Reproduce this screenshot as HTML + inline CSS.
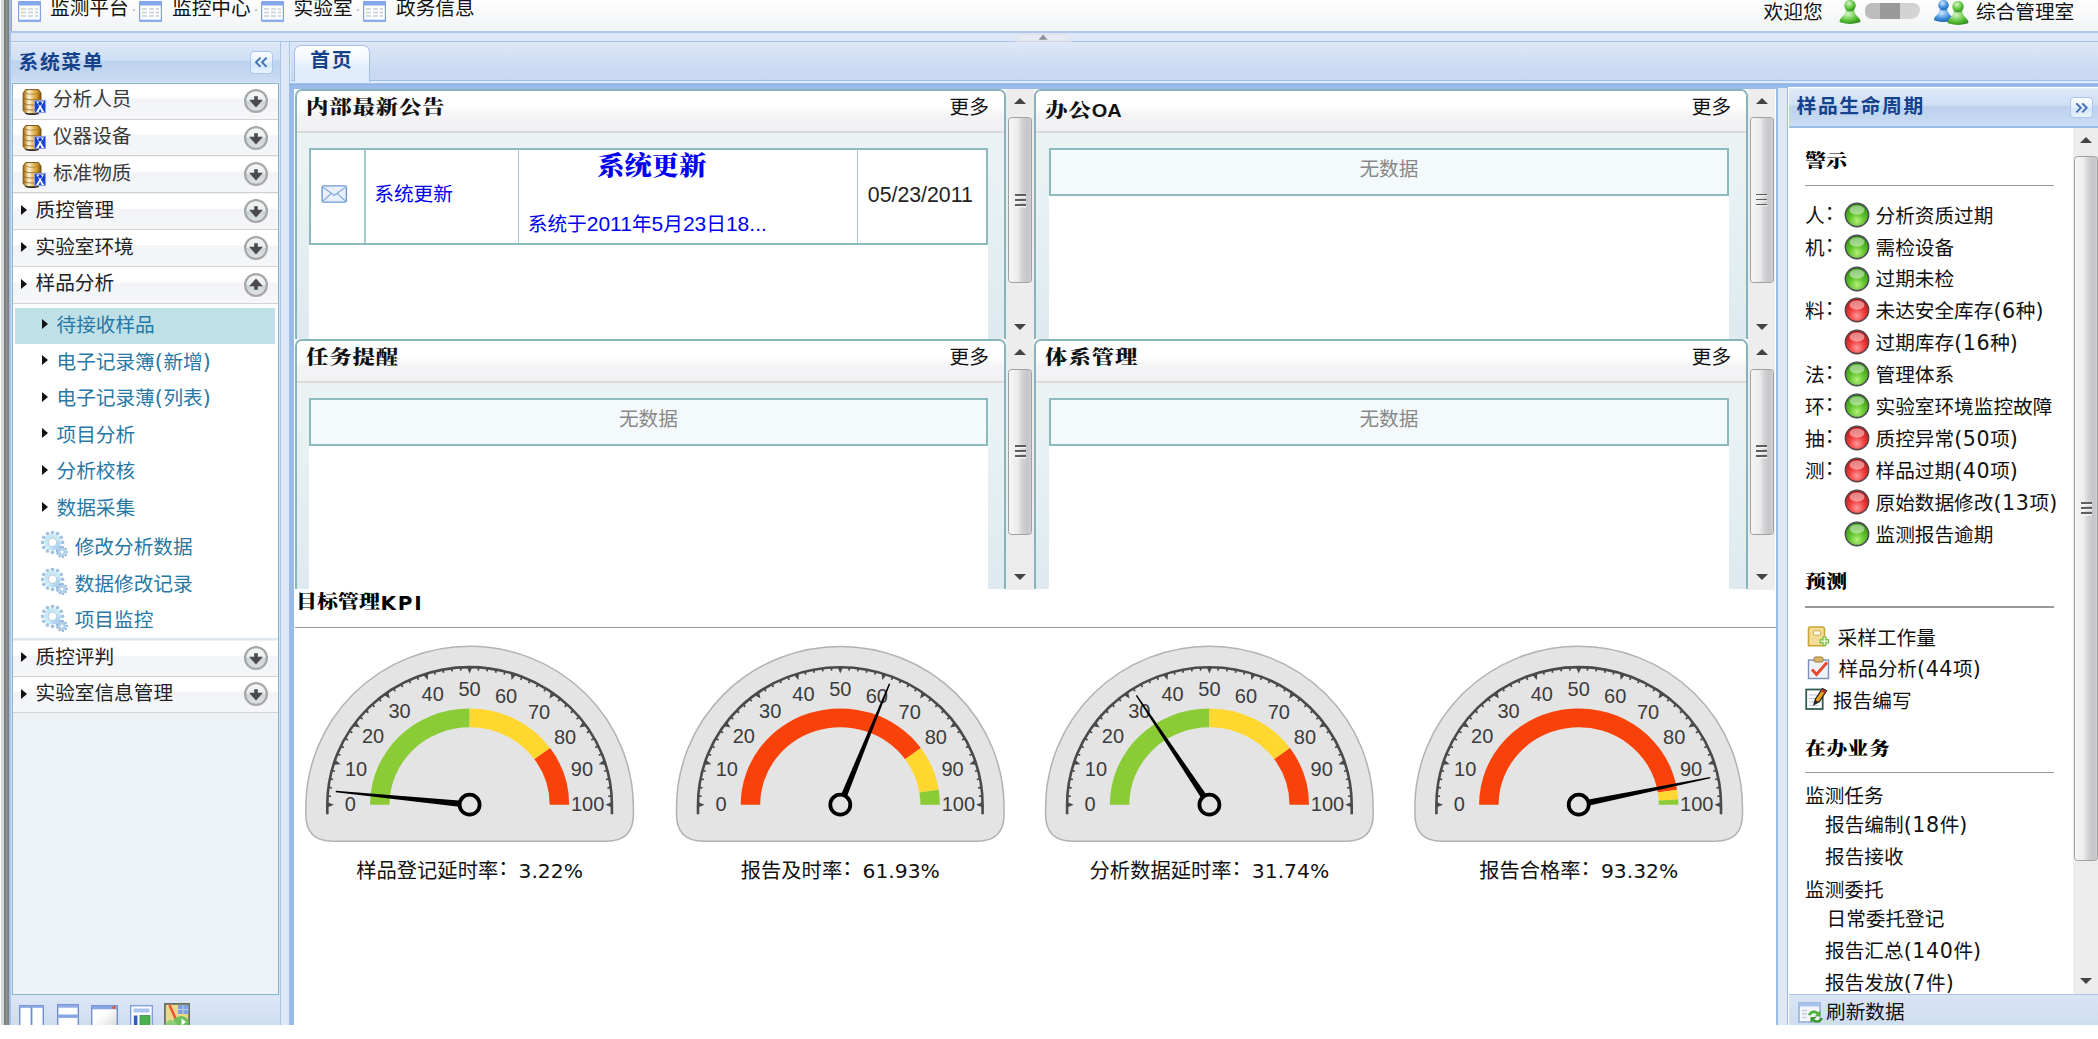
<!DOCTYPE html><html lang="zh"><head><meta charset="utf-8"><title>监测平台</title><style>
html,body{margin:0;padding:0;}
body{width:2098px;height:1039px;overflow:hidden;background:#fff;position:relative;
 font-family:"DejaVu Sans","Liberation Sans","Noto Sans CJK SC",sans-serif;font-size:19.67px;color:#222;}
.a{position:absolute;}
.t{position:absolute;white-space:nowrap;line-height:24px;height:24px;}
.b{font-weight:bold;}
.hd{background:linear-gradient(#e8f0fa 0%,#dbe7f7 6%,#cfdff4 45%,#bed2ee 48%,#c2d6f0 75%,#cddef4 100%);}
.row{position:absolute;left:0;width:266px;height:35.3px;background:linear-gradient(#fff 0%,#fff 41%,#f3f4f7 44%,#f5f6f8 100%);border-bottom:1.5px solid #d2d2d2;}
.sub{position:absolute;white-space:nowrap;color:#2878a5;line-height:24px;height:24px;}
.tri{position:absolute;width:0;height:0;border-left:6px solid #111;border-top:5.5px solid transparent;border-bottom:5.5px solid transparent;}
.pl{position:absolute;overflow:hidden;border:2.2px solid #86b4ba;border-bottom:none;border-radius:7px 7px 0 0;background:linear-gradient(#eaf2f4 30%,#deeaf0 100%);box-sizing:border-box;}
.plh{position:absolute;left:0;top:0;right:0;height:39.6px;background:linear-gradient(#fff 0%,#fff 40%,#f4f4f6 60%,#f1f1f4 100%);border-bottom:2.2px solid #dadada;}
.sb{position:absolute;background:#ededed;}
.th{position:absolute;left:1.4px;right:1.6px;border:1.8px solid #a0a0a0;border-radius:3.5px;background:linear-gradient(90deg,#f6f6f6 0%,#ececec 40%,#d2d2d5 60%,#c6c6ca 85%,#cfcfd2 100%);box-sizing:border-box;}
.hr{position:absolute;height:1.6px;background:#9a9a9a;}
.box{position:absolute;box-sizing:border-box;border:2.2px solid #8dbabf;background:#f4f9fb;}
.lk{color:#0000f0;}
.gy{color:#888;}
.c{position:relative;top:-2.8px;}
.n{letter-spacing:0.6px;font-size:20.6px;line-height:0;}
.d{font-family:'Liberation Sans',sans-serif;font-size:21px;line-height:0;}
</style></head><body>
<svg width="0" height="0" style="position:absolute"><defs><linearGradient id="db" x1="0" x2="1"><stop offset="0" stop-color="#8f6418"/><stop offset="0.12" stop-color="#c79a45"/><stop offset="0.32" stop-color="#fff6dc"/><stop offset="0.52" stop-color="#e9c77a"/><stop offset="0.78" stop-color="#d39a2c"/><stop offset="1" stop-color="#7c4f0c"/></linearGradient><linearGradient id="rb" x1="0" y1="0" x2="0" y2="1"><stop offset="0" stop-color="#f6f8f8"/><stop offset="0.5" stop-color="#e8edef"/><stop offset="0.5" stop-color="#cbd3d6"/><stop offset="1" stop-color="#e0e5e7"/></linearGradient><linearGradient id="gr" x1="0" y1="0" x2="1" y2="1"><stop offset="0" stop-color="#bfe0f2"/><stop offset="0.55" stop-color="#c8eef8"/><stop offset="1" stop-color="#8fb8e8"/></linearGradient></defs></svg>
<div class="a" style="left:1px;top:0;width:3px;height:1025px;background:#d5d9d7"></div>
<div class="a" style="left:4px;top:0;width:5px;height:1025px;background:linear-gradient(90deg,#6f787d,#8f8f8f 50%,#78787e)"></div>
<div class="a" style="left:9px;top:0;width:2089px;height:1025px;background:#dfe8f6"></div>
<div class="a" style="left:8.7px;top:0;width:2px;height:1025px;background:#9fbee6"></div>
<div class="a" style="left:11px;top:0;width:2087px;height:31px;background:linear-gradient(#fdfdfe 0%,#f8f9fa 45%,#f1f2f5 100%);border-left:1.7px solid #a2a2a2;box-sizing:border-box"></div>
<div class="a" style="left:9px;top:31px;width:2089px;height:2.2px;background:#adc8ec"></div>
<div class="a" style="left:9px;top:41px;width:2089px;height:1.3px;background:#a5c4ec"></div>
<svg class="a" style="left:18px;top:0.6px" width="23" height="21" viewBox="0 0 23 21"><rect x="0.5" y="0.5" width="22" height="20" rx="1.5" fill="#fdfdfe" stroke="#7fa2e6" stroke-width="1.4"/><rect x="0.5" y="0.5" width="22" height="4" fill="#86a8ea"/><g stroke="#c9cdd6" stroke-width="1.3"><path d="M3 8H8M10 8H15M17 8H20M3 11.5H8M10 11.5H15M17 11.5H20M3 15H8M10 15H15M17 15H20"/></g><rect x="0.5" y="18.6" width="22" height="1.9" fill="#8fb0ee"/></svg>
<div class="t" style="left:50px;top:-3.4px;font-size:19.67px;color:#111">监测平台</div>
<svg class="a" style="left:139.4px;top:0.6px" width="23" height="21" viewBox="0 0 23 21"><rect x="0.5" y="0.5" width="22" height="20" rx="1.5" fill="#fdfdfe" stroke="#7fa2e6" stroke-width="1.4"/><rect x="0.5" y="0.5" width="22" height="4" fill="#86a8ea"/><g stroke="#c9cdd6" stroke-width="1.3"><path d="M3 8H8M10 8H15M17 8H20M3 11.5H8M10 11.5H15M17 11.5H20M3 15H8M10 15H15M17 15H20"/></g><rect x="0.5" y="18.6" width="22" height="1.9" fill="#8fb0ee"/></svg>
<div class="t" style="left:172px;top:-3.4px;font-size:19.67px;color:#111">监控中心</div>
<svg class="a" style="left:261.4px;top:0.6px" width="23" height="21" viewBox="0 0 23 21"><rect x="0.5" y="0.5" width="22" height="20" rx="1.5" fill="#fdfdfe" stroke="#7fa2e6" stroke-width="1.4"/><rect x="0.5" y="0.5" width="22" height="4" fill="#86a8ea"/><g stroke="#c9cdd6" stroke-width="1.3"><path d="M3 8H8M10 8H15M17 8H20M3 11.5H8M10 11.5H15M17 11.5H20M3 15H8M10 15H15M17 15H20"/></g><rect x="0.5" y="18.6" width="22" height="1.9" fill="#8fb0ee"/></svg>
<div class="t" style="left:293.6px;top:-3.4px;font-size:19.67px;color:#111">实验室</div>
<svg class="a" style="left:363.4px;top:0.6px" width="23" height="21" viewBox="0 0 23 21"><rect x="0.5" y="0.5" width="22" height="20" rx="1.5" fill="#fdfdfe" stroke="#7fa2e6" stroke-width="1.4"/><rect x="0.5" y="0.5" width="22" height="4" fill="#86a8ea"/><g stroke="#c9cdd6" stroke-width="1.3"><path d="M3 8H8M10 8H15M17 8H20M3 11.5H8M10 11.5H15M17 11.5H20M3 15H8M10 15H15M17 15H20"/></g><rect x="0.5" y="18.6" width="22" height="1.9" fill="#8fb0ee"/></svg>
<div class="t" style="left:396px;top:-3.4px;font-size:19.67px;color:#111">政务信息</div>
<div class="a" style="left:132.5px;top:9px;width:2px;height:2px;background:#c5c5c5"></div>
<div class="a" style="left:254.5px;top:9px;width:2px;height:2px;background:#c5c5c5"></div>
<div class="a" style="left:356.5px;top:9px;width:2px;height:2px;background:#c5c5c5"></div>
<div class="t" style="left:1763.6px;top:0.6px;font-size:19.67px;color:#111">欢迎您</div>
<svg class="a" style="left:1839.4px;top:0px" width="22" height="24" viewBox="0 0 22 24"><defs><radialGradient id="g5cc33a" cx="40%" cy="30%" r="75%"><stop offset="0" stop-color="#d6f5c8"/><stop offset="0.6" stop-color="#5cc33a"/><stop offset="1" stop-color="#2e8a1d"/></radialGradient></defs><path d="M2.2 22.6C0.6 22.4 0.2 21 1 19.6C3.6 15.8 6.6 14.2 7 9.8H15C15.4 14.2 18.4 15.8 21 19.6C21.8 21 21.4 22.4 19.8 22.6Q11 25.4 2.2 22.6Z" fill="url(#g5cc33a)"/><circle cx="11" cy="5.6" r="5.7" fill="url(#g5cc33a)"/></svg>
<div class="a" style="left:1865px;top:3.3px;width:55px;height:16.2px;border-radius:9px 9px 12px 9px;background:linear-gradient(90deg,#bdbdbd 0,#bdbdbd 27%,#999 27.5%,#999 63%,#d3d3d3 63.5%,#d3d3d3 100%)"></div>
<svg class="a" style="left:1933.4px;top:0px" width="21" height="22" viewBox="0 0 22 24"><defs><radialGradient id="g3f8fdc" cx="40%" cy="30%" r="75%"><stop offset="0" stop-color="#cfe6fb"/><stop offset="0.6" stop-color="#3f8fdc"/><stop offset="1" stop-color="#1f5fa8"/></radialGradient></defs><path d="M2.2 22.6C0.6 22.4 0.2 21 1 19.6C3.6 15.8 6.6 14.2 7 9.8H15C15.4 14.2 18.4 15.8 21 19.6C21.8 21 21.4 22.4 19.8 22.6Q11 25.4 2.2 22.6Z" fill="url(#g3f8fdc)"/><circle cx="11" cy="5.6" r="5.7" fill="url(#g3f8fdc)"/></svg>
<svg class="a" style="left:1946.5px;top:1px" width="22" height="24" viewBox="0 0 22 24"><defs><radialGradient id="g5cc33a" cx="40%" cy="30%" r="75%"><stop offset="0" stop-color="#d6f5c8"/><stop offset="0.6" stop-color="#5cc33a"/><stop offset="1" stop-color="#2e8a1d"/></radialGradient></defs><path d="M2.2 22.6C0.6 22.4 0.2 21 1 19.6C3.6 15.8 6.6 14.2 7 9.8H15C15.4 14.2 18.4 15.8 21 19.6C21.8 21 21.4 22.4 19.8 22.6Q11 25.4 2.2 22.6Z" fill="url(#g5cc33a)"/><circle cx="11" cy="5.6" r="5.7" fill="url(#g5cc33a)"/></svg>
<div class="t" style="left:1976px;top:0.6px;font-size:19.67px;color:#111">综合管理室</div>
<div class="a" style="left:10px;top:41px;width:271px;height:984px;border:1.3px solid #a5c4ec;box-sizing:border-box;background:#d4e2f5"></div>
<div class="a hd" style="left:11.3px;top:42.3px;width:268.4px;height:40px"></div>
<div class="t b" style="left:18.5px;top:50.8px;font-size:19.8px;letter-spacing:1.6px;color:#15428b">系统菜单</div>
<div class="a" style="left:250px;top:51px;width:23px;height:22.5px;border:1.3px solid #a9c6ee;border-radius:4px;box-sizing:border-box;background:linear-gradient(#fbfdff,#e3effc 50%,#d3e6fa 55%,#e9f3fd)"></div>
<svg class="a" style="left:250px;top:51px" width="23" height="22.5" viewBox="0 0 23 22.5"><path d="M10.5 6.7L6 11.3L10.5 15.9M16.6 6.7L12.1 11.3L16.6 15.9" fill="none" stroke="#3f6fb0" stroke-width="1.9"/></svg>
<div class="a" style="left:11.6px;top:82.6px;width:267.8px;height:912.6px;border:1.5px solid #8cb5c5;box-sizing:border-box;background:#edf2f6;overflow:hidden" id="acc">
<div class="row" style="top:-0.3px">
<svg class="a" style="left:9.700000000000001px;top:4.3px" width="25" height="27" viewBox="0 0 25 27"><path d="M1.2 5L3.6 1.6H16.6L19 5V22.6L16.2 25.6H4L1.2 22.6Z" fill="url(#db)" stroke="#7a5414" stroke-width="1"/><path d="M1.6 4.6Q10 8 18.6 4.6" fill="none" stroke="#a87b28" stroke-width="0.9" opacity="0.8"/><path d="M1.6 10.2Q10 13.4 18.6 10.2M1.6 15.4Q10 18.6 18.6 15.4M1.6 20.4Q10 23.6 18.6 20.4" fill="none" stroke="#8f651a" stroke-width="1.1" opacity="0.75"/><path d="M3.4 25.4Q10 27.4 16.8 25.4" fill="none" stroke="#2e2e2e" stroke-width="1.5"/><rect x="12.6" y="12.4" width="11" height="12.2" fill="#1442d2" stroke="#9aa4e2" stroke-width="0.9"/><path d="M14.2 13.6H22L18.9 18.4L22.2 24H19.6L18.1 20.4L16.6 24H14L17.3 18.4Z" fill="#fff"/><circle cx="18.1" cy="15.6" r="1.9" fill="#1038c8"/></svg>
<div class="t" style="left:40.3px;top:5.2px;font-size:19.67px;color:#3a3a3a">分析人员</div>
<svg class="a" style="left:230.29999999999998px;top:4.600000000000001px" width="26" height="26" viewBox="-13 -13 26 26"><circle r="10.9" fill="url(#rb)" stroke="#a8a8a8" stroke-width="2.3"/><path d="M-1.8 -4.7H1.8V-1.2H6.9L0 6.4L-6.9 -1.2H-1.8Z" fill="#4a4a4a"/></svg>
</div>
<div class="row" style="top:36.5px">
<svg class="a" style="left:9.700000000000001px;top:4.3px" width="25" height="27" viewBox="0 0 25 27"><path d="M1.2 5L3.6 1.6H16.6L19 5V22.6L16.2 25.6H4L1.2 22.6Z" fill="url(#db)" stroke="#7a5414" stroke-width="1"/><path d="M1.6 4.6Q10 8 18.6 4.6" fill="none" stroke="#a87b28" stroke-width="0.9" opacity="0.8"/><path d="M1.6 10.2Q10 13.4 18.6 10.2M1.6 15.4Q10 18.6 18.6 15.4M1.6 20.4Q10 23.6 18.6 20.4" fill="none" stroke="#8f651a" stroke-width="1.1" opacity="0.75"/><path d="M3.4 25.4Q10 27.4 16.8 25.4" fill="none" stroke="#2e2e2e" stroke-width="1.5"/><rect x="12.6" y="12.4" width="11" height="12.2" fill="#1442d2" stroke="#9aa4e2" stroke-width="0.9"/><path d="M14.2 13.6H22L18.9 18.4L22.2 24H19.6L18.1 20.4L16.6 24H14L17.3 18.4Z" fill="#fff"/><circle cx="18.1" cy="15.6" r="1.9" fill="#1038c8"/></svg>
<div class="t" style="left:40.3px;top:5.2px;font-size:19.67px;color:#3a3a3a">仪器设备</div>
<svg class="a" style="left:230.29999999999998px;top:4.600000000000001px" width="26" height="26" viewBox="-13 -13 26 26"><circle r="10.9" fill="url(#rb)" stroke="#a8a8a8" stroke-width="2.3"/><path d="M-1.8 -4.7H1.8V-1.2H6.9L0 6.4L-6.9 -1.2H-1.8Z" fill="#4a4a4a"/></svg>
</div>
<div class="row" style="top:73.3px">
<svg class="a" style="left:9.700000000000001px;top:4.3px" width="25" height="27" viewBox="0 0 25 27"><path d="M1.2 5L3.6 1.6H16.6L19 5V22.6L16.2 25.6H4L1.2 22.6Z" fill="url(#db)" stroke="#7a5414" stroke-width="1"/><path d="M1.6 4.6Q10 8 18.6 4.6" fill="none" stroke="#a87b28" stroke-width="0.9" opacity="0.8"/><path d="M1.6 10.2Q10 13.4 18.6 10.2M1.6 15.4Q10 18.6 18.6 15.4M1.6 20.4Q10 23.6 18.6 20.4" fill="none" stroke="#8f651a" stroke-width="1.1" opacity="0.75"/><path d="M3.4 25.4Q10 27.4 16.8 25.4" fill="none" stroke="#2e2e2e" stroke-width="1.5"/><rect x="12.6" y="12.4" width="11" height="12.2" fill="#1442d2" stroke="#9aa4e2" stroke-width="0.9"/><path d="M14.2 13.6H22L18.9 18.4L22.2 24H19.6L18.1 20.4L16.6 24H14L17.3 18.4Z" fill="#fff"/><circle cx="18.1" cy="15.6" r="1.9" fill="#1038c8"/></svg>
<div class="t" style="left:40.3px;top:5.2px;font-size:19.67px;color:#3a3a3a">标准物质</div>
<svg class="a" style="left:230.29999999999998px;top:4.600000000000001px" width="26" height="26" viewBox="-13 -13 26 26"><circle r="10.9" fill="url(#rb)" stroke="#a8a8a8" stroke-width="2.3"/><path d="M-1.8 -4.7H1.8V-1.2H6.9L0 6.4L-6.9 -1.2H-1.8Z" fill="#4a4a4a"/></svg>
</div>
<div class="row" style="top:110.1px">
<div class="tri" style="left:8.5px;top:11.8px"></div>
<div class="t" style="left:22.9px;top:5.2px;font-size:19.67px;color:#222">质控管理</div>
<svg class="a" style="left:230.29999999999998px;top:4.600000000000001px" width="26" height="26" viewBox="-13 -13 26 26"><circle r="10.9" fill="url(#rb)" stroke="#a8a8a8" stroke-width="2.3"/><path d="M-1.8 -4.7H1.8V-1.2H6.9L0 6.4L-6.9 -1.2H-1.8Z" fill="#4a4a4a"/></svg>
</div>
<div class="row" style="top:146.9px">
<div class="tri" style="left:8.5px;top:11.8px"></div>
<div class="t" style="left:22.9px;top:5.2px;font-size:19.67px;color:#222">实验室环境</div>
<svg class="a" style="left:230.29999999999998px;top:4.600000000000001px" width="26" height="26" viewBox="-13 -13 26 26"><circle r="10.9" fill="url(#rb)" stroke="#a8a8a8" stroke-width="2.3"/><path d="M-1.8 -4.7H1.8V-1.2H6.9L0 6.4L-6.9 -1.2H-1.8Z" fill="#4a4a4a"/></svg>
</div>
<div class="row" style="top:183.7px">
<div class="tri" style="left:8.5px;top:11.8px"></div>
<div class="t" style="left:22.9px;top:5.2px;font-size:19.67px;color:#222">样品分析</div>
<svg class="a" style="left:230.29999999999998px;top:4.600000000000001px" width="26" height="26" viewBox="-13 -13 26 26"><circle r="10.9" fill="url(#rb)" stroke="#a8a8a8" stroke-width="2.3"/><path d="M-1.8 -4.7H1.8V-1.2H6.9L0 6.4L-6.9 -1.2H-1.8Z" transform="rotate(180)" fill="#4a4a4a"/></svg>
</div>
<div class="a" style="left:0;top:220.5px;width:266px;height:334.7px;background:#fff"></div>
<div class="a" style="left:2.9px;top:224.2px;width:259.7px;height:36px;background:#bfe0e7"></div>
<div class="tri" style="left:29.5px;top:235.4px"></div>
<div class="sub" style="left:43.9px;top:230.5px;font-size:19.67px">待接收样品</div>
<div class="tri" style="left:29.5px;top:271.9px"></div>
<div class="sub" style="left:43.9px;top:267.0px;font-size:19.67px">电子记录簿<span class="n">(</span>新增<span class="n">)</span></div>
<div class="tri" style="left:29.5px;top:308.4px"></div>
<div class="sub" style="left:43.9px;top:303.5px;font-size:19.67px">电子记录薄<span class="n">(</span>列表<span class="n">)</span></div>
<div class="tri" style="left:29.5px;top:344.9px"></div>
<div class="sub" style="left:43.9px;top:340.0px;font-size:19.67px">项目分析</div>
<div class="tri" style="left:29.5px;top:381.6px"></div>
<div class="sub" style="left:43.9px;top:376.7px;font-size:19.67px">分析校核</div>
<div class="tri" style="left:29.5px;top:418.2px"></div>
<div class="sub" style="left:43.9px;top:413.3px;font-size:19.67px">数据采集</div>
<svg class="a" style="left:28.9px;top:447.9px" width="28" height="28" viewBox="0 0 28 28"><circle cx="21.50" cy="11.30" r="1.9" fill="#a3c4e1"/><circle cx="20.16" cy="16.30" r="1.9" fill="#a3c4e1"/><circle cx="16.50" cy="19.96" r="1.9" fill="#a3c4e1"/><circle cx="11.50" cy="21.30" r="1.9" fill="#a3c4e1"/><circle cx="6.50" cy="19.96" r="1.9" fill="#a3c4e1"/><circle cx="2.84" cy="16.30" r="1.9" fill="#a3c4e1"/><circle cx="1.50" cy="11.30" r="1.9" fill="#a3c4e1"/><circle cx="2.84" cy="6.30" r="1.9" fill="#a3c4e1"/><circle cx="6.50" cy="2.64" r="1.9" fill="#a3c4e1"/><circle cx="11.50" cy="1.30" r="1.9" fill="#a3c4e1"/><circle cx="16.50" cy="2.64" r="1.9" fill="#a3c4e1"/><circle cx="20.16" cy="6.30" r="1.9" fill="#a3c4e1"/><circle cx="11.5" cy="11.3" r="8.2" fill="url(#gr)"/><circle cx="11.5" cy="11.3" r="4.2" fill="#fff" stroke="#9aa6b2" stroke-width="0.8" stroke-opacity="0.7"/><circle cx="25.70" cy="21.00" r="1.3" fill="#94b8da"/><circle cx="24.60" cy="24.02" r="1.3" fill="#94b8da"/><circle cx="21.82" cy="25.63" r="1.3" fill="#94b8da"/><circle cx="18.65" cy="25.07" r="1.3" fill="#94b8da"/><circle cx="16.58" cy="22.61" r="1.3" fill="#94b8da"/><circle cx="16.58" cy="19.39" r="1.3" fill="#94b8da"/><circle cx="18.65" cy="16.93" r="1.3" fill="#94b8da"/><circle cx="21.82" cy="16.37" r="1.3" fill="#94b8da"/><circle cx="24.60" cy="17.98" r="1.3" fill="#94b8da"/><circle cx="21" cy="21" r="3.9" fill="#b4d0e8"/><circle cx="21" cy="21" r="1.5" fill="#fff"/></svg>
<div class="sub" style="left:62.1px;top:452.0px;font-size:19.67px">修改分析数据</div>
<svg class="a" style="left:28.9px;top:484.9px" width="28" height="28" viewBox="0 0 28 28"><circle cx="21.50" cy="11.30" r="1.9" fill="#a3c4e1"/><circle cx="20.16" cy="16.30" r="1.9" fill="#a3c4e1"/><circle cx="16.50" cy="19.96" r="1.9" fill="#a3c4e1"/><circle cx="11.50" cy="21.30" r="1.9" fill="#a3c4e1"/><circle cx="6.50" cy="19.96" r="1.9" fill="#a3c4e1"/><circle cx="2.84" cy="16.30" r="1.9" fill="#a3c4e1"/><circle cx="1.50" cy="11.30" r="1.9" fill="#a3c4e1"/><circle cx="2.84" cy="6.30" r="1.9" fill="#a3c4e1"/><circle cx="6.50" cy="2.64" r="1.9" fill="#a3c4e1"/><circle cx="11.50" cy="1.30" r="1.9" fill="#a3c4e1"/><circle cx="16.50" cy="2.64" r="1.9" fill="#a3c4e1"/><circle cx="20.16" cy="6.30" r="1.9" fill="#a3c4e1"/><circle cx="11.5" cy="11.3" r="8.2" fill="url(#gr)"/><circle cx="11.5" cy="11.3" r="4.2" fill="#fff" stroke="#9aa6b2" stroke-width="0.8" stroke-opacity="0.7"/><circle cx="25.70" cy="21.00" r="1.3" fill="#94b8da"/><circle cx="24.60" cy="24.02" r="1.3" fill="#94b8da"/><circle cx="21.82" cy="25.63" r="1.3" fill="#94b8da"/><circle cx="18.65" cy="25.07" r="1.3" fill="#94b8da"/><circle cx="16.58" cy="22.61" r="1.3" fill="#94b8da"/><circle cx="16.58" cy="19.39" r="1.3" fill="#94b8da"/><circle cx="18.65" cy="16.93" r="1.3" fill="#94b8da"/><circle cx="21.82" cy="16.37" r="1.3" fill="#94b8da"/><circle cx="24.60" cy="17.98" r="1.3" fill="#94b8da"/><circle cx="21" cy="21" r="3.9" fill="#b4d0e8"/><circle cx="21" cy="21" r="1.5" fill="#fff"/></svg>
<div class="sub" style="left:62.1px;top:489.0px;font-size:19.67px">数据修改记录</div>
<svg class="a" style="left:28.9px;top:521.4px" width="28" height="28" viewBox="0 0 28 28"><circle cx="21.50" cy="11.30" r="1.9" fill="#a3c4e1"/><circle cx="20.16" cy="16.30" r="1.9" fill="#a3c4e1"/><circle cx="16.50" cy="19.96" r="1.9" fill="#a3c4e1"/><circle cx="11.50" cy="21.30" r="1.9" fill="#a3c4e1"/><circle cx="6.50" cy="19.96" r="1.9" fill="#a3c4e1"/><circle cx="2.84" cy="16.30" r="1.9" fill="#a3c4e1"/><circle cx="1.50" cy="11.30" r="1.9" fill="#a3c4e1"/><circle cx="2.84" cy="6.30" r="1.9" fill="#a3c4e1"/><circle cx="6.50" cy="2.64" r="1.9" fill="#a3c4e1"/><circle cx="11.50" cy="1.30" r="1.9" fill="#a3c4e1"/><circle cx="16.50" cy="2.64" r="1.9" fill="#a3c4e1"/><circle cx="20.16" cy="6.30" r="1.9" fill="#a3c4e1"/><circle cx="11.5" cy="11.3" r="8.2" fill="url(#gr)"/><circle cx="11.5" cy="11.3" r="4.2" fill="#fff" stroke="#9aa6b2" stroke-width="0.8" stroke-opacity="0.7"/><circle cx="25.70" cy="21.00" r="1.3" fill="#94b8da"/><circle cx="24.60" cy="24.02" r="1.3" fill="#94b8da"/><circle cx="21.82" cy="25.63" r="1.3" fill="#94b8da"/><circle cx="18.65" cy="25.07" r="1.3" fill="#94b8da"/><circle cx="16.58" cy="22.61" r="1.3" fill="#94b8da"/><circle cx="16.58" cy="19.39" r="1.3" fill="#94b8da"/><circle cx="18.65" cy="16.93" r="1.3" fill="#94b8da"/><circle cx="21.82" cy="16.37" r="1.3" fill="#94b8da"/><circle cx="24.60" cy="17.98" r="1.3" fill="#94b8da"/><circle cx="21" cy="21" r="3.9" fill="#b4d0e8"/><circle cx="21" cy="21" r="1.5" fill="#fff"/></svg>
<div class="sub" style="left:62.1px;top:525.5px;font-size:19.67px">项目监控</div>
<div class="a" style="left:0;top:554.7px;width:266px;height:1.5px;background:#dfe7ee"></div>
<div class="row" style="top:557.1px;height:35px">
<div class="tri" style="left:8.5px;top:11.8px"></div>
<div class="t" style="left:22.9px;top:5.2px;font-size:19.67px;color:#222">质控评判</div>
<svg class="a" style="left:230.29999999999998px;top:4.300000000000001px" width="26" height="26" viewBox="-13 -13 26 26"><circle r="10.9" fill="url(#rb)" stroke="#a8a8a8" stroke-width="2.3"/><path d="M-1.8 -4.7H1.8V-1.2H6.9L0 6.4L-6.9 -1.2H-1.8Z" fill="#4a4a4a"/></svg>
</div>
<div class="row" style="top:593.6px;height:35px">
<div class="tri" style="left:8.5px;top:11.8px"></div>
<div class="t" style="left:22.9px;top:5.2px;font-size:19.67px;color:#222">实验室信息管理</div>
<svg class="a" style="left:230.29999999999998px;top:4.300000000000001px" width="26" height="26" viewBox="-13 -13 26 26"><circle r="10.9" fill="url(#rb)" stroke="#a8a8a8" stroke-width="2.3"/><path d="M-1.8 -4.7H1.8V-1.2H6.9L0 6.4L-6.9 -1.2H-1.8Z" fill="#4a4a4a"/></svg>
</div>
</div>
<div class="a" style="left:11.3px;top:996px;width:268.4px;height:29px;background:linear-gradient(#dbe6f6,#cfddf1)"></div>
<svg class="a" style="left:19px;top:1004.5px" width="25" height="21" viewBox="0 0 25 21"><rect x="0.7" y="0.7" width="23.6" height="22" fill="#fff" stroke="#6f8fd0" stroke-width="1.4"/><rect x="0.7" y="0.7" width="23.6" height="2.2" fill="#8fabe6"/><path d="M12.5 2V22" stroke="#6f8fd0" stroke-width="1.8"/></svg>
<svg class="a" style="left:56.5px;top:1003.5px" width="22" height="22" viewBox="0 0 22 22"><rect x="0.7" y="0.7" width="20.6" height="24" fill="#fff" stroke="#6f8fd0" stroke-width="1.4"/><rect x="0.7" y="0.7" width="20.6" height="3" fill="#8fabe6"/><rect x="0.7" y="10.5" width="20.6" height="3.4" fill="#86a6e2"/></svg>
<svg class="a" style="left:91px;top:1004.5px" width="27" height="21" viewBox="0 0 27 21"><defs><linearGradient id="wg" x1="0" y1="0" x2="1" y2="1"><stop offset="0.4" stop-color="#fff"/><stop offset="1" stop-color="#d8d8d8"/></linearGradient></defs><rect x="0.7" y="0.7" width="25.6" height="22" fill="url(#wg)" stroke="#6f8fd0" stroke-width="1.4"/><rect x="0.7" y="0.7" width="25.6" height="3.6" fill="#86a6e2"/><rect x="21.5" y="1.2" width="3" height="2.6" fill="#e8503a"/></svg>
<svg class="a" style="left:129.5px;top:1004.5px" width="23" height="21" viewBox="0 0 23 21"><rect x="0.7" y="0.7" width="21.6" height="22" fill="#fff" stroke="#7f9fdc" stroke-width="1.4"/><rect x="3.5" y="3.5" width="16" height="4" fill="#a9c4f0"/><rect x="3.8" y="10.5" width="3.6" height="10" fill="#2f5fb8"/><rect x="10" y="10.5" width="10" height="10" fill="#4caf50" stroke="#3c8f40" stroke-width="0.8"/></svg>
<svg class="a" style="left:164px;top:1003.3px" width="26" height="22" viewBox="0 0 26 22"><rect x="0.9" y="0.9" width="24.2" height="24" fill="#e9d98a" stroke="#6a6f66" stroke-width="1.8"/><rect x="14" y="2" width="10.5" height="9" fill="#7f9fe0"/><path d="M14 6.5H24.5M19 2V11" stroke="#b9cdf2" stroke-width="1"/><path d="M5.5 2L14 21" stroke="#f0503a" stroke-width="2.6"/><circle cx="17" cy="21" r="8" fill="#6fbf5f"/><circle cx="7" cy="23" r="6" fill="#8fcf7a"/><path d="M17.5 15.5L22 19L17.5 22.5Z" fill="#fff"/></svg>
<div class="a" style="left:289.3px;top:41px;width:1809px;height:43px;box-sizing:border-box;border:1.2px solid #a3c1ea;border-right:none;background:#deecfd"></div>
<div class="a" style="left:290.5px;top:42.3px;width:1808px;height:37.5px;background:linear-gradient(#dfe9f7 0%,#d5e2f5 30%,#cbdbf2 70%,#c7d8f0 100%)"></div>
<div class="a" style="left:290.5px;top:79.6px;width:1808px;height:1.8px;background:#a0bfe8"></div>
<div class="a" style="left:294.4px;top:44.5px;width:75.5px;height:37px;box-sizing:border-box;border:1.6px solid #a3c1ea;border-bottom:none;border-radius:7px 7px 0 0;background:linear-gradient(#ffffff 0%,#f3f8fe 35%,#e3eefc 55%,#deecfd 100%)"></div>
<div class="t b" style="left:310.3px;top:48.6px;font-size:19.8px;letter-spacing:1.6px;color:#15428b">首页</div>
<div class="a" style="left:289.3px;top:83.9px;width:1809px;height:941.1px;background:#99bbe8"></div>
<div class="a" style="left:289.3px;top:83.9px;width:1809px;height:1.6px;background:#8db2e3"></div>
<div class="a" style="left:294px;top:88.6px;width:1482px;height:936.4px;background:#fff"></div>
<div class="a" style="left:1778.4px;top:88.3px;width:8.8px;height:936.7px;background:#dfe8f6"></div>
<svg class="a" style="left:1012px;top:32.5px" width="62" height="9" viewBox="1012 32.5 62 9"><path d="M1014.6 40.8L1021 33.6H1065.5L1071.8 40.8Z" fill="#e6eaf3" stroke="#d9dbe0" stroke-width="0.8"/><path d="M1038.6 39.3L1043.1 33.9L1047.6 39.3Z" fill="#8a8f99"/></svg>
<div class="pl" style="left:294.6px;top:89px;width:711.7px;height:250.2px"><div class="plh"></div><div class="t b" style="left:9.3px;top:5.2px;font-size:22.4px;letter-spacing:0.9px;transform:scaleY(0.88);color:#111;font-family:'Liberation Serif','Noto Serif CJK SC',serif;font-weight:900">内部最新公告</div><div class="t" style="left:652.9px;top:4.5px;font-size:19.67px;color:#111">更多</div><div class="a" style="left:12.2px;top:58.0px;width:679.3px;height:200.0px;background:#fff"></div><div class="box" style="left:12.2px;top:56.9px;width:679.3px;height:97.2px;background:#fff"><div class="a" style="left:53.3px;top:0;width:1.5px;height:100%;background:#a6cbcf"></div><div class="a" style="left:207px;top:0;width:1.5px;height:100%;background:#a6cbcf"></div><div class="a" style="left:546px;top:0;width:1.5px;height:100%;background:#a6cbcf"></div><svg class="a" style="left:10.3px;top:35.3px" width="26.5" height="18" viewBox="0 0 29 20"><rect x="1" y="1" width="27" height="18" rx="1.5" fill="#e8f0fb" stroke="#6f9bd6" stroke-width="1.6"/><path d="M2 2.5L14.5 11.5L27 2.5M2 18L11 9.5M27 18L18 9.5" fill="none" stroke="#8db0de" stroke-width="1.4"/></svg><div class="t lk" style="left:63.5px;top:33px;font-size:19.67px">系统更新</div><div class="t lk b" style="left:286.5px;top:2.6px;transform:scaleY(0.94);font-size:27.3px;line-height:30px;height:30px;font-family:'Liberation Serif','Noto Serif CJK SC',serif;font-weight:800">系统更新</div><div class="t lk" style="left:217px;top:63.2px;font-size:19.67px">系统于<span class="d">2011</span>年<span class="d">5</span>月<span class="d">23</span>日<span class="d">18...</span></div><div class="t" style="left:557px;top:33.5px;font-size:21.3px;color:#222;font-family:'Liberation Sans',sans-serif">05/23/2011</div></div></div>
<div class="sb" style="left:1006.4px;top:89px;width:27.3px;height:251px"><div class="a" style="left:7.7px;top:9.0px;width:0;height:0;border-bottom:6.5px solid #444;border-left:6px solid transparent;border-right:6px solid transparent"></div><div class="a" style="left:7.7px;top:235.0px;width:0;height:0;border-top:6.5px solid #444;border-left:6px solid transparent;border-right:6px solid transparent"></div><div class="th" style="top:28.2px;height:165.8px"></div><div class="a" style="left:8.2px;top:105.2px;width:11px;height:1.7px;background:#5e5e5e;box-shadow:0 1.5px 0 #f4f4f4"></div><div class="a" style="left:8.2px;top:110.2px;width:11px;height:1.7px;background:#5e5e5e;box-shadow:0 1.5px 0 #f4f4f4"></div><div class="a" style="left:8.2px;top:115.2px;width:11px;height:1.7px;background:#5e5e5e;box-shadow:0 1.5px 0 #f4f4f4"></div></div>
<div class="pl" style="left:1033.8px;top:89px;width:714px;height:250.2px"><div class="plh"></div><div class="t b" style="left:9.3px;top:7.8px;font-size:22.4px;letter-spacing:0.9px;transform:scaleY(0.88);color:#111;font-family:'Liberation Serif','Noto Serif CJK SC',serif;font-weight:900">办公<span style="font-family:'Liberation Sans',sans-serif;font-weight:bold;font-size:20px;letter-spacing:0">OA</span></div><div class="t" style="left:656.0px;top:4.5px;font-size:19.67px;color:#111">更多</div><div class="a" style="left:12.8px;top:58.0px;width:680.6px;height:200.0px;background:#fff"></div><div class="box" style="left:12.8px;top:56.9px;width:680.6px;height:48.2px"><div class="t gy" style="left:0;right:0;text-align:center;top:8px;font-size:19.67px">无数据</div></div></div>
<div class="sb" style="left:1748.2px;top:89px;width:27px;height:251px"><div class="a" style="left:7.5px;top:9.0px;width:0;height:0;border-bottom:6.5px solid #444;border-left:6px solid transparent;border-right:6px solid transparent"></div><div class="a" style="left:7.5px;top:235.0px;width:0;height:0;border-top:6.5px solid #444;border-left:6px solid transparent;border-right:6px solid transparent"></div><div class="th" style="top:28.2px;height:165.8px"></div><div class="a" style="left:8.0px;top:104.7px;width:11px;height:1.7px;background:#5e5e5e;box-shadow:0 1.5px 0 #f4f4f4"></div><div class="a" style="left:8.0px;top:109.7px;width:11px;height:1.7px;background:#5e5e5e;box-shadow:0 1.5px 0 #f4f4f4"></div><div class="a" style="left:8.0px;top:114.7px;width:11px;height:1.7px;background:#5e5e5e;box-shadow:0 1.5px 0 #f4f4f4"></div></div>
<div class="pl" style="left:294.6px;top:339.2px;width:711.7px;height:250.3px"><div class="plh"></div><div class="t b" style="left:9.3px;top:5.3px;font-size:22.4px;letter-spacing:0.9px;transform:scaleY(0.88);color:#111;font-family:'Liberation Serif','Noto Serif CJK SC',serif;font-weight:900">任务提醒</div><div class="t" style="left:652.9px;top:4.5px;font-size:19.67px;color:#111">更多</div><div class="a" style="left:12.2px;top:58.0px;width:679.3px;height:200.0px;background:#fff"></div><div class="box" style="left:12.2px;top:56.9px;width:679.3px;height:48.2px"><div class="t gy" style="left:0;right:0;text-align:center;top:8px;font-size:19.67px">无数据</div></div></div>
<div class="sb" style="left:1006.4px;top:340px;width:27.3px;height:249.5px"><div class="a" style="left:7.7px;top:9.0px;width:0;height:0;border-bottom:6.5px solid #444;border-left:6px solid transparent;border-right:6px solid transparent"></div><div class="a" style="left:7.7px;top:233.5px;width:0;height:0;border-top:6.5px solid #444;border-left:6px solid transparent;border-right:6px solid transparent"></div><div class="th" style="top:28.5px;height:166.0px"></div><div class="a" style="left:8.2px;top:105.0px;width:11px;height:1.7px;background:#5e5e5e;box-shadow:0 1.5px 0 #f4f4f4"></div><div class="a" style="left:8.2px;top:110.0px;width:11px;height:1.7px;background:#5e5e5e;box-shadow:0 1.5px 0 #f4f4f4"></div><div class="a" style="left:8.2px;top:115.0px;width:11px;height:1.7px;background:#5e5e5e;box-shadow:0 1.5px 0 #f4f4f4"></div></div>
<div class="pl" style="left:1033.8px;top:339.2px;width:714px;height:250.3px"><div class="plh"></div><div class="t b" style="left:9.3px;top:5.3px;font-size:22.4px;letter-spacing:0.9px;transform:scaleY(0.88);color:#111;font-family:'Liberation Serif','Noto Serif CJK SC',serif;font-weight:900">体系管理</div><div class="t" style="left:656.0px;top:4.5px;font-size:19.67px;color:#111">更多</div><div class="a" style="left:12.8px;top:58.0px;width:680.6px;height:200.0px;background:#fff"></div><div class="box" style="left:12.8px;top:56.9px;width:680.6px;height:48.2px"><div class="t gy" style="left:0;right:0;text-align:center;top:8px;font-size:19.67px">无数据</div></div></div>
<div class="sb" style="left:1748.2px;top:340px;width:27px;height:249.5px"><div class="a" style="left:7.5px;top:9.0px;width:0;height:0;border-bottom:6.5px solid #444;border-left:6px solid transparent;border-right:6px solid transparent"></div><div class="a" style="left:7.5px;top:233.5px;width:0;height:0;border-top:6.5px solid #444;border-left:6px solid transparent;border-right:6px solid transparent"></div><div class="th" style="top:28.5px;height:166.0px"></div><div class="a" style="left:8.0px;top:105.0px;width:11px;height:1.7px;background:#5e5e5e;box-shadow:0 1.5px 0 #f4f4f4"></div><div class="a" style="left:8.0px;top:110.0px;width:11px;height:1.7px;background:#5e5e5e;box-shadow:0 1.5px 0 #f4f4f4"></div><div class="a" style="left:8.0px;top:115.0px;width:11px;height:1.7px;background:#5e5e5e;box-shadow:0 1.5px 0 #f4f4f4"></div></div>
<div class="t b" style="left:296px;top:590.2px;font-size:21px;letter-spacing:0;transform:scaleY(0.89);color:#000;font-family:'Liberation Serif','Noto Serif CJK SC',serif;font-weight:900">目标管理</div>
<div class="t b" style="left:380.6px;top:590.6px;font-size:20px;letter-spacing:1.7px;color:#000;font-family:'DejaVu Sans',sans-serif">KPI</div>
<div class="hr" style="left:295px;top:626.6px;width:1481px"></div>
<svg class="a" style="left:294px;top:630px;font-family:'Liberation Sans',sans-serif;font-size:20px;fill:#3c3c3c" width="1482" height="260" viewBox="294 630 1482 260"><path d="M305.8 807.7A163.8 161.4 0 0 1 633.4 807.7L633.4 814.2Q633.4 841.2 606.4 841.2L332.8 841.2Q305.8 841.2 305.8 814.2Z" fill="#e4e4e4" stroke="#b2b2b2" stroke-width="1.5"/><path d="M327.30 814.30L327.30 804.70A142.3 137.60 0 0 1 611.90 804.70L611.90 814.30" fill="none" stroke="#4a4a4a" stroke-width="2.6"/><path d="M327.58 796.06L330.97 796.27M328.42 787.45L331.80 787.87M329.82 778.92L333.16 779.53M331.77 770.48L335.06 771.30M337.29 754.04L340.45 755.25M340.84 746.11L343.92 747.51M344.90 738.41L347.88 739.99M349.45 730.97L352.32 732.73M359.96 716.99L362.58 719.08M365.87 710.50L368.35 712.75M372.19 704.39L374.52 706.79M378.89 698.67L381.06 701.21M393.35 688.52L395.17 691.29M401.05 684.12L402.68 687.00M409.01 680.19L410.46 683.17M417.22 676.76L418.47 679.82M434.21 671.42L435.06 674.60M442.94 669.53L443.57 672.76M451.77 668.18L452.19 671.44M460.66 667.37L460.88 670.65M478.54 667.37L478.32 670.65M487.43 668.18L487.01 671.44M496.26 669.53L495.63 672.76M504.99 671.42L504.14 674.60M521.98 676.76L520.73 679.82M530.19 680.19L528.74 683.17M538.15 684.12L536.52 687.00M545.85 688.52L544.03 691.29M560.31 698.67L558.14 701.21M567.01 704.39L564.68 706.79M573.33 710.50L570.85 712.75M579.24 716.99L576.62 719.08M589.75 730.97L586.88 732.73M594.30 738.41L591.32 739.99M598.36 746.11L595.28 747.51M601.91 754.04L598.75 755.25M607.43 770.48L604.14 771.30M609.38 778.92L606.04 779.53M610.78 787.45L607.40 787.87M611.62 796.06L608.23 796.27" stroke="#4a4a4a" stroke-width="1.7" fill="none"/><path d="M327.82 807.21L327.82 802.19L333.90 804.70ZM333.96 764.72L335.57 759.94L340.54 764.15ZM353.37 726.15L356.43 722.08L359.82 727.57ZM384.16 695.26L388.37 692.31L389.84 698.54ZM423.32 675.09L428.26 673.54L427.67 679.90ZM467.00 667.60L472.20 667.60L469.60 673.48ZM510.94 673.54L515.88 675.09L511.53 679.90ZM550.83 692.31L555.04 695.26L549.36 698.54ZM582.77 722.08L585.83 726.15L579.38 727.57ZM603.63 759.94L605.24 764.72L598.66 764.15ZM611.38 802.19L611.38 807.21L605.30 804.70Z" fill="#4a4a4a"/><text x="350.3" y="811.1" text-anchor="middle">0</text><text x="356.1" y="775.5" text-anchor="middle">10</text><text x="373.1" y="743.3" text-anchor="middle">20</text><text x="399.5" y="717.8" text-anchor="middle">30</text><text x="432.7" y="701.4" text-anchor="middle">40</text><text x="469.6" y="695.7" text-anchor="middle">50</text><text x="506.1" y="702.5" text-anchor="middle">60</text><text x="539.0" y="718.7" text-anchor="middle">70</text><text x="565.1" y="744.0" text-anchor="middle">80</text><text x="581.9" y="775.8" text-anchor="middle">90</text><text x="587.7" y="811.1" text-anchor="middle">100</text><path d="M370.00 804.70A99.6 96.31 0 0 1 469.60 708.39L469.60 727.24A80.1 77.46 0 0 0 389.50 804.70Z" fill="#8acb36"/><path d="M469.60 708.39A99.6 96.31 0 0 1 550.18 748.09L534.40 759.17A80.1 77.46 0 0 0 469.60 727.24Z" fill="#ffd72e"/><path d="M550.18 748.09A99.6 96.31 0 0 1 569.20 804.70L549.70 804.70A80.1 77.46 0 0 0 534.40 759.17Z" fill="#f9420a"/><path d="M461.94 800.83L335.86 790.87L335.72 792.26L461.34 807.00Z" fill="#000"/><circle cx="469.6" cy="804.7" r="10" fill="#e4e4e4" stroke="#000" stroke-width="3.8"/><path d="M676.5 807.7A163.8 161.4 0 0 1 1004.1 807.7L1004.1 814.2Q1004.1 841.2 977.1 841.2L703.5 841.2Q676.5 841.2 676.5 814.2Z" fill="#e4e4e4" stroke="#b2b2b2" stroke-width="1.5"/><path d="M698.00 814.30L698.00 804.70A142.3 137.60 0 0 1 982.60 804.70L982.60 814.30" fill="none" stroke="#4a4a4a" stroke-width="2.6"/><path d="M698.28 796.06L701.67 796.27M699.12 787.45L702.50 787.87M700.52 778.92L703.86 779.53M702.47 770.48L705.76 771.30M707.99 754.04L711.15 755.25M711.54 746.11L714.62 747.51M715.60 738.41L718.58 739.99M720.15 730.97L723.02 732.73M730.66 716.99L733.28 719.08M736.57 710.50L739.05 712.75M742.89 704.39L745.22 706.79M749.59 698.67L751.76 701.21M764.05 688.52L765.87 691.29M771.75 684.12L773.38 687.00M779.71 680.19L781.16 683.17M787.92 676.76L789.17 679.82M804.91 671.42L805.76 674.60M813.64 669.53L814.27 672.76M822.47 668.18L822.89 671.44M831.36 667.37L831.58 670.65M849.24 667.37L849.02 670.65M858.13 668.18L857.71 671.44M866.96 669.53L866.33 672.76M875.69 671.42L874.84 674.60M892.68 676.76L891.43 679.82M900.89 680.19L899.44 683.17M908.85 684.12L907.22 687.00M916.55 688.52L914.73 691.29M931.01 698.67L928.84 701.21M937.71 704.39L935.38 706.79M944.03 710.50L941.55 712.75M949.94 716.99L947.32 719.08M960.45 730.97L957.58 732.73M965.00 738.41L962.02 739.99M969.06 746.11L965.98 747.51M972.61 754.04L969.45 755.25M978.13 770.48L974.84 771.30M980.08 778.92L976.74 779.53M981.48 787.45L978.10 787.87M982.32 796.06L978.93 796.27" stroke="#4a4a4a" stroke-width="1.7" fill="none"/><path d="M698.52 807.21L698.52 802.19L704.60 804.70ZM704.66 764.72L706.27 759.94L711.24 764.15ZM724.07 726.15L727.13 722.08L730.52 727.57ZM754.86 695.26L759.07 692.31L760.54 698.54ZM794.02 675.09L798.96 673.54L798.37 679.90ZM837.70 667.60L842.90 667.60L840.30 673.48ZM881.64 673.54L886.58 675.09L882.23 679.90ZM921.53 692.31L925.74 695.26L920.06 698.54ZM953.47 722.08L956.53 726.15L950.08 727.57ZM974.33 759.94L975.94 764.72L969.36 764.15ZM982.08 802.19L982.08 807.21L976.00 804.70Z" fill="#4a4a4a"/><text x="721.0" y="811.1" text-anchor="middle">0</text><text x="726.8" y="775.5" text-anchor="middle">10</text><text x="743.8" y="743.3" text-anchor="middle">20</text><text x="770.2" y="717.8" text-anchor="middle">30</text><text x="803.4" y="701.4" text-anchor="middle">40</text><text x="840.3" y="695.7" text-anchor="middle">50</text><text x="876.8" y="702.5" text-anchor="middle">60</text><text x="909.7" y="718.7" text-anchor="middle">70</text><text x="935.8" y="744.0" text-anchor="middle">80</text><text x="952.6" y="775.8" text-anchor="middle">90</text><text x="958.4" y="811.1" text-anchor="middle">100</text><path d="M740.70 804.70A99.6 96.31 0 0 1 920.88 748.09L905.10 759.17A80.1 77.46 0 0 0 760.20 804.70Z" fill="#f9420a"/><path d="M920.88 748.09A99.6 96.31 0 0 1 938.67 789.63L919.41 792.58A80.1 77.46 0 0 0 905.10 759.17Z" fill="#ffd72e"/><path d="M938.67 789.63A99.6 96.31 0 0 1 939.90 804.70L920.40 804.70A80.1 77.46 0 0 0 919.41 792.58Z" fill="#8acb36"/><path d="M846.10 798.67L890.19 683.93L888.89 683.40L840.36 796.33Z" fill="#000"/><circle cx="840.3" cy="804.7" r="10" fill="#e4e4e4" stroke="#000" stroke-width="3.8"/><path d="M1045.6 807.7A163.8 161.4 0 0 1 1373.2 807.7L1373.2 814.2Q1373.2 841.2 1346.2 841.2L1072.6 841.2Q1045.6 841.2 1045.6 814.2Z" fill="#e4e4e4" stroke="#b2b2b2" stroke-width="1.5"/><path d="M1067.10 814.30L1067.10 804.70A142.3 137.60 0 0 1 1351.70 804.70L1351.70 814.30" fill="none" stroke="#4a4a4a" stroke-width="2.6"/><path d="M1067.38 796.06L1070.77 796.27M1068.22 787.45L1071.60 787.87M1069.62 778.92L1072.96 779.53M1071.57 770.48L1074.86 771.30M1077.09 754.04L1080.25 755.25M1080.64 746.11L1083.72 747.51M1084.70 738.41L1087.68 739.99M1089.25 730.97L1092.12 732.73M1099.76 716.99L1102.38 719.08M1105.67 710.50L1108.15 712.75M1111.99 704.39L1114.32 706.79M1118.69 698.67L1120.86 701.21M1133.15 688.52L1134.97 691.29M1140.85 684.12L1142.48 687.00M1148.81 680.19L1150.26 683.17M1157.02 676.76L1158.27 679.82M1174.01 671.42L1174.86 674.60M1182.74 669.53L1183.37 672.76M1191.57 668.18L1191.99 671.44M1200.46 667.37L1200.68 670.65M1218.34 667.37L1218.12 670.65M1227.23 668.18L1226.81 671.44M1236.06 669.53L1235.43 672.76M1244.79 671.42L1243.94 674.60M1261.78 676.76L1260.53 679.82M1269.99 680.19L1268.54 683.17M1277.95 684.12L1276.32 687.00M1285.65 688.52L1283.83 691.29M1300.11 698.67L1297.94 701.21M1306.81 704.39L1304.48 706.79M1313.13 710.50L1310.65 712.75M1319.04 716.99L1316.42 719.08M1329.55 730.97L1326.68 732.73M1334.10 738.41L1331.12 739.99M1338.16 746.11L1335.08 747.51M1341.71 754.04L1338.55 755.25M1347.23 770.48L1343.94 771.30M1349.18 778.92L1345.84 779.53M1350.58 787.45L1347.20 787.87M1351.42 796.06L1348.03 796.27" stroke="#4a4a4a" stroke-width="1.7" fill="none"/><path d="M1067.62 807.21L1067.62 802.19L1073.70 804.70ZM1073.76 764.72L1075.37 759.94L1080.34 764.15ZM1093.17 726.15L1096.23 722.08L1099.62 727.57ZM1123.96 695.26L1128.17 692.31L1129.64 698.54ZM1163.12 675.09L1168.06 673.54L1167.47 679.90ZM1206.80 667.60L1212.00 667.60L1209.40 673.48ZM1250.74 673.54L1255.68 675.09L1251.33 679.90ZM1290.63 692.31L1294.84 695.26L1289.16 698.54ZM1322.57 722.08L1325.63 726.15L1319.18 727.57ZM1343.43 759.94L1345.04 764.72L1338.46 764.15ZM1351.18 802.19L1351.18 807.21L1345.10 804.70Z" fill="#4a4a4a"/><text x="1090.1" y="811.1" text-anchor="middle">0</text><text x="1095.9" y="775.5" text-anchor="middle">10</text><text x="1112.9" y="743.3" text-anchor="middle">20</text><text x="1139.3" y="717.8" text-anchor="middle">30</text><text x="1172.5" y="701.4" text-anchor="middle">40</text><text x="1209.4" y="695.7" text-anchor="middle">50</text><text x="1245.9" y="702.5" text-anchor="middle">60</text><text x="1278.8" y="718.7" text-anchor="middle">70</text><text x="1304.9" y="744.0" text-anchor="middle">80</text><text x="1321.7" y="775.8" text-anchor="middle">90</text><text x="1327.5" y="811.1" text-anchor="middle">100</text><path d="M1109.80 804.70A99.6 96.31 0 0 1 1209.40 708.39L1209.40 727.24A80.1 77.46 0 0 0 1129.30 804.70Z" fill="#8acb36"/><path d="M1209.40 708.39A99.6 96.31 0 0 1 1289.98 748.09L1274.20 759.17A80.1 77.46 0 0 0 1209.40 727.24Z" fill="#ffd72e"/><path d="M1289.98 748.09A99.6 96.31 0 0 1 1309.00 804.70L1289.50 804.70A80.1 77.46 0 0 0 1274.20 759.17Z" fill="#f9420a"/><path d="M1207.64 796.48L1136.99 695.07L1135.82 695.85L1202.48 799.92Z" fill="#000"/><circle cx="1209.4" cy="804.7" r="10" fill="#e4e4e4" stroke="#000" stroke-width="3.8"/><path d="M1414.9 807.7A163.8 161.4 0 0 1 1742.5 807.7L1742.5 814.2Q1742.5 841.2 1715.5 841.2L1441.9 841.2Q1414.9 841.2 1414.9 814.2Z" fill="#e4e4e4" stroke="#b2b2b2" stroke-width="1.5"/><path d="M1436.40 814.30L1436.40 804.70A142.3 137.60 0 0 1 1721.00 804.70L1721.00 814.30" fill="none" stroke="#4a4a4a" stroke-width="2.6"/><path d="M1436.68 796.06L1440.07 796.27M1437.52 787.45L1440.90 787.87M1438.92 778.92L1442.26 779.53M1440.87 770.48L1444.16 771.30M1446.39 754.04L1449.55 755.25M1449.94 746.11L1453.02 747.51M1454.00 738.41L1456.98 739.99M1458.55 730.97L1461.42 732.73M1469.06 716.99L1471.68 719.08M1474.97 710.50L1477.45 712.75M1481.29 704.39L1483.62 706.79M1487.99 698.67L1490.16 701.21M1502.45 688.52L1504.27 691.29M1510.15 684.12L1511.78 687.00M1518.11 680.19L1519.56 683.17M1526.32 676.76L1527.57 679.82M1543.31 671.42L1544.16 674.60M1552.04 669.53L1552.67 672.76M1560.87 668.18L1561.29 671.44M1569.76 667.37L1569.98 670.65M1587.64 667.37L1587.42 670.65M1596.53 668.18L1596.11 671.44M1605.36 669.53L1604.73 672.76M1614.09 671.42L1613.24 674.60M1631.08 676.76L1629.83 679.82M1639.29 680.19L1637.84 683.17M1647.25 684.12L1645.62 687.00M1654.95 688.52L1653.13 691.29M1669.41 698.67L1667.24 701.21M1676.11 704.39L1673.78 706.79M1682.43 710.50L1679.95 712.75M1688.34 716.99L1685.72 719.08M1698.85 730.97L1695.98 732.73M1703.40 738.41L1700.42 739.99M1707.46 746.11L1704.38 747.51M1711.01 754.04L1707.85 755.25M1716.53 770.48L1713.24 771.30M1718.48 778.92L1715.14 779.53M1719.88 787.45L1716.50 787.87M1720.72 796.06L1717.33 796.27" stroke="#4a4a4a" stroke-width="1.7" fill="none"/><path d="M1436.92 807.21L1436.92 802.19L1443.00 804.70ZM1443.06 764.72L1444.67 759.94L1449.64 764.15ZM1462.47 726.15L1465.53 722.08L1468.92 727.57ZM1493.26 695.26L1497.47 692.31L1498.94 698.54ZM1532.42 675.09L1537.36 673.54L1536.77 679.90ZM1576.10 667.60L1581.30 667.60L1578.70 673.48ZM1620.04 673.54L1624.98 675.09L1620.63 679.90ZM1659.93 692.31L1664.14 695.26L1658.46 698.54ZM1691.87 722.08L1694.93 726.15L1688.48 727.57ZM1712.73 759.94L1714.34 764.72L1707.76 764.15ZM1720.48 802.19L1720.48 807.21L1714.40 804.70Z" fill="#4a4a4a"/><text x="1459.4" y="811.1" text-anchor="middle">0</text><text x="1465.2" y="775.5" text-anchor="middle">10</text><text x="1482.2" y="743.3" text-anchor="middle">20</text><text x="1508.6" y="717.8" text-anchor="middle">30</text><text x="1541.8" y="701.4" text-anchor="middle">40</text><text x="1578.7" y="695.7" text-anchor="middle">50</text><text x="1615.2" y="702.5" text-anchor="middle">60</text><text x="1648.1" y="718.7" text-anchor="middle">70</text><text x="1674.2" y="744.0" text-anchor="middle">80</text><text x="1691.0" y="775.8" text-anchor="middle">90</text><text x="1696.8" y="811.1" text-anchor="middle">100</text><path d="M1479.10 804.70A99.6 96.31 0 0 1 1677.07 789.63L1657.81 792.58A80.1 77.46 0 0 0 1498.60 804.70Z" fill="#f9420a"/><path d="M1677.07 789.63A99.6 96.31 0 0 1 1678.16 799.56L1658.69 800.57A80.1 77.46 0 0 0 1657.81 792.58Z" fill="#ffd72e"/><path d="M1678.16 799.56A99.6 96.31 0 0 1 1678.30 804.70L1658.80 804.70A80.1 77.46 0 0 0 1658.69 800.57Z" fill="#8acb36"/><path d="M1587.15 806.12L1710.39 778.29L1710.11 776.92L1585.90 800.05Z" fill="#000"/><circle cx="1578.7" cy="804.7" r="10" fill="#e4e4e4" stroke="#000" stroke-width="3.8"/></svg>
<div class="t" style="left:269.6px;top:858.8px;width:400px;text-align:center;font-size:20.3px;color:#111">样品登记延时率<span class="c">：</span>3.22%</div>
<div class="t" style="left:640.3px;top:858.8px;width:400px;text-align:center;font-size:20.3px;color:#111">报告及时率<span class="c">：</span>61.93%</div>
<div class="t" style="left:1009.4px;top:858.8px;width:400px;text-align:center;font-size:20.3px;color:#111">分析数据延时率<span class="c">：</span>31.74%</div>
<div class="t" style="left:1378.7px;top:858.8px;width:400px;text-align:center;font-size:20.3px;color:#111">报告合格率<span class="c">：</span>93.32%</div>
<div class="a" style="left:1787px;top:86.8px;width:311px;height:938.2px;background:#fff;border-left:1.6px solid #99bbe8;box-sizing:border-box"></div>
<div class="a hd" style="left:1788.6px;top:87.6px;width:309.4px;height:38.4px"></div>
<div class="a" style="left:1788.6px;top:126px;width:309.4px;height:1.5px;background:#99bbe8"></div>
<div class="t b" style="left:1796.5px;top:95.4px;font-size:19.8px;letter-spacing:1.6px;color:#15428b">样品生命周期</div>
<div class="a" style="left:2070px;top:96.5px;width:22.5px;height:21.5px;border:1.3px solid #a9c6ee;border-radius:4px;box-sizing:border-box;background:linear-gradient(#fbfdff,#e3effc 50%,#d3e6fa 55%,#e9f3fd)"></div>
<svg class="a" style="left:2070px;top:96.5px" width="22.5" height="21.5" viewBox="0 0 22.5 21.5"><path d="M6.3 6.3L10.8 10.8L6.3 15.3M12.2 6.3L16.7 10.8L12.2 15.3" fill="none" stroke="#3f6fb0" stroke-width="1.9"/></svg>
<div class="sb" style="left:2072.6px;top:127.5px;width:27px;height:866.5px"><div class="a" style="left:7.5px;top:9.0px;width:0;height:0;border-bottom:6.5px solid #444;border-left:6px solid transparent;border-right:6px solid transparent"></div><div class="a" style="left:7.5px;top:850.5px;width:0;height:0;border-top:6.5px solid #444;border-left:6px solid transparent;border-right:6px solid transparent"></div><div class="th" style="top:28.9px;height:704.2px"></div><div class="a" style="left:8.0px;top:374.5px;width:11px;height:1.7px;background:#5e5e5e;box-shadow:0 1.5px 0 #f4f4f4"></div><div class="a" style="left:8.0px;top:379.5px;width:11px;height:1.7px;background:#5e5e5e;box-shadow:0 1.5px 0 #f4f4f4"></div><div class="a" style="left:8.0px;top:384.5px;width:11px;height:1.7px;background:#5e5e5e;box-shadow:0 1.5px 0 #f4f4f4"></div></div>
<div class="t b" style="left:1805px;top:148.9px;font-size:20.8px;letter-spacing:0.5px;transform:scaleY(0.9);color:#000;font-family:'Liberation Serif','Noto Serif CJK SC',serif;font-weight:900">警示</div>
<div class="hr" style="left:1805px;top:184.7px;width:249px"></div>
<svg width="0" height="0" style="position:absolute"><defs><radialGradient id="bg_g" cx="50%" cy="75%" r="75%"><stop offset="0" stop-color="#b6f27a"/><stop offset="0.45" stop-color="#5fc22a"/><stop offset="1" stop-color="#2f8f10"/></radialGradient><radialGradient id="bg_r" cx="50%" cy="75%" r="75%"><stop offset="0" stop-color="#ff9a9a"/><stop offset="0.45" stop-color="#ee3a3a"/><stop offset="1" stop-color="#b81414"/></radialGradient></defs></svg>
<div class="t" style="left:1805px;top:205.1px;font-size:19.67px;color:#111">人<span class="c">：</span></div>
<svg class="a" style="left:1844.0px;top:202.3px" width="26" height="26" viewBox="-13 -13 26 26"><circle r="11.6" fill="url(#bg_g)" stroke="#4c4c54" stroke-width="1.6"/><ellipse cx="0" cy="-5" rx="7.5" ry="4.6" fill="#fff" opacity="0.45"/></svg>
<div class="t" style="left:1875.5px;top:205.1px;font-size:19.67px;color:#111">分析资质过期</div>
<div class="t" style="left:1805px;top:236.7px;font-size:19.67px;color:#111">机<span class="c">：</span></div>
<svg class="a" style="left:1844.0px;top:233.9px" width="26" height="26" viewBox="-13 -13 26 26"><circle r="11.6" fill="url(#bg_g)" stroke="#4c4c54" stroke-width="1.6"/><ellipse cx="0" cy="-5" rx="7.5" ry="4.6" fill="#fff" opacity="0.45"/></svg>
<div class="t" style="left:1875.5px;top:236.7px;font-size:19.67px;color:#111">需检设备</div>
<svg class="a" style="left:1844.0px;top:265.6px" width="26" height="26" viewBox="-13 -13 26 26"><circle r="11.6" fill="url(#bg_g)" stroke="#4c4c54" stroke-width="1.6"/><ellipse cx="0" cy="-5" rx="7.5" ry="4.6" fill="#fff" opacity="0.45"/></svg>
<div class="t" style="left:1875.5px;top:268.4px;font-size:19.67px;color:#111">过期未检</div>
<div class="t" style="left:1805px;top:300.2px;font-size:19.67px;color:#111">料<span class="c">：</span></div>
<svg class="a" style="left:1844.0px;top:297.4px" width="26" height="26" viewBox="-13 -13 26 26"><circle r="11.6" fill="url(#bg_r)" stroke="#5a4248" stroke-width="1.6"/><ellipse cx="0" cy="-5" rx="7.5" ry="4.6" fill="#fff" opacity="0.45"/></svg>
<div class="t" style="left:1875.5px;top:300.2px;font-size:19.67px;color:#111">未达安全库存<span class="n">(6</span>种<span class="n">)</span></div>
<svg class="a" style="left:1844.0px;top:329.3px" width="26" height="26" viewBox="-13 -13 26 26"><circle r="11.6" fill="url(#bg_r)" stroke="#5a4248" stroke-width="1.6"/><ellipse cx="0" cy="-5" rx="7.5" ry="4.6" fill="#fff" opacity="0.45"/></svg>
<div class="t" style="left:1875.5px;top:332.1px;font-size:19.67px;color:#111">过期库存<span class="n">(16</span>种<span class="n">)</span></div>
<div class="t" style="left:1805px;top:364.2px;font-size:19.67px;color:#111">法<span class="c">：</span></div>
<svg class="a" style="left:1844.0px;top:361.4px" width="26" height="26" viewBox="-13 -13 26 26"><circle r="11.6" fill="url(#bg_g)" stroke="#4c4c54" stroke-width="1.6"/><ellipse cx="0" cy="-5" rx="7.5" ry="4.6" fill="#fff" opacity="0.45"/></svg>
<div class="t" style="left:1875.5px;top:364.2px;font-size:19.67px;color:#111">管理体系</div>
<div class="t" style="left:1805px;top:396.0px;font-size:19.67px;color:#111">环<span class="c">：</span></div>
<svg class="a" style="left:1844.0px;top:393.2px" width="26" height="26" viewBox="-13 -13 26 26"><circle r="11.6" fill="url(#bg_g)" stroke="#4c4c54" stroke-width="1.6"/><ellipse cx="0" cy="-5" rx="7.5" ry="4.6" fill="#fff" opacity="0.45"/></svg>
<div class="t" style="left:1875.5px;top:396.0px;font-size:19.67px;color:#111">实验室环境监控故障</div>
<div class="t" style="left:1805px;top:427.8px;font-size:19.67px;color:#111">抽<span class="c">：</span></div>
<svg class="a" style="left:1844.0px;top:425.0px" width="26" height="26" viewBox="-13 -13 26 26"><circle r="11.6" fill="url(#bg_r)" stroke="#5a4248" stroke-width="1.6"/><ellipse cx="0" cy="-5" rx="7.5" ry="4.6" fill="#fff" opacity="0.45"/></svg>
<div class="t" style="left:1875.5px;top:427.8px;font-size:19.67px;color:#111">质控异常<span class="n">(50</span>项<span class="n">)</span></div>
<div class="t" style="left:1805px;top:459.8px;font-size:19.67px;color:#111">测<span class="c">：</span></div>
<svg class="a" style="left:1844.0px;top:457.0px" width="26" height="26" viewBox="-13 -13 26 26"><circle r="11.6" fill="url(#bg_r)" stroke="#5a4248" stroke-width="1.6"/><ellipse cx="0" cy="-5" rx="7.5" ry="4.6" fill="#fff" opacity="0.45"/></svg>
<div class="t" style="left:1875.5px;top:459.8px;font-size:19.67px;color:#111">样品过期<span class="n">(40</span>项<span class="n">)</span></div>
<svg class="a" style="left:1844.0px;top:488.9px" width="26" height="26" viewBox="-13 -13 26 26"><circle r="11.6" fill="url(#bg_r)" stroke="#5a4248" stroke-width="1.6"/><ellipse cx="0" cy="-5" rx="7.5" ry="4.6" fill="#fff" opacity="0.45"/></svg>
<div class="t" style="left:1875.5px;top:491.7px;font-size:19.67px;color:#111">原始数据修改<span class="n">(13</span>项<span class="n">)</span></div>
<svg class="a" style="left:1844.0px;top:520.7px" width="26" height="26" viewBox="-13 -13 26 26"><circle r="11.6" fill="url(#bg_g)" stroke="#4c4c54" stroke-width="1.6"/><ellipse cx="0" cy="-5" rx="7.5" ry="4.6" fill="#fff" opacity="0.45"/></svg>
<div class="t" style="left:1875.5px;top:523.5px;font-size:19.67px;color:#111">监测报告逾期</div>
<div class="t b" style="left:1805px;top:570.3px;font-size:20.8px;letter-spacing:0.5px;transform:scaleY(0.9);color:#000;font-family:'Liberation Serif','Noto Serif CJK SC',serif;font-weight:900">预测</div>
<div class="hr" style="left:1805px;top:606.0px;width:249px"></div>
<svg class="a" style="left:1807px;top:626px" width="24" height="22" viewBox="0 0 24 22"><path d="M1.5 3.2Q1.5 1 3.7 1H15.3Q17.5 1 17.5 3.2V19.8H1.5Z" fill="#f3dd96" stroke="#c9a530" stroke-width="1.6"/><rect x="6.3" y="4.8" width="7.4" height="4.4" rx="1.2" fill="#fdf8e4" stroke="#c9a940" stroke-width="1"/><path d="M12.6 15.2H22.2M17.4 10.4V20" stroke="#7cc242" stroke-width="4.4"/><path d="M13.8 15.2H21M17.4 11.6V18.8" stroke="#eaf7dc" stroke-width="1.5"/></svg>
<div class="t" style="left:1837.6px;top:626.5px;font-size:19.67px;color:#111">采样工作量</div>
<svg class="a" style="left:1806.5px;top:656px" width="24" height="24" viewBox="0 0 24 24"><rect x="1.5" y="4" width="20" height="18.5" fill="#eef2fa" stroke="#7a8fb8" stroke-width="1.4"/><rect x="7" y="1" width="9" height="5" rx="1.5" fill="#d9b56a" stroke="#9a7a30" stroke-width="1"/><path d="M5 13.5L9.5 18.5L20 6.5" fill="none" stroke="#e8482c" stroke-width="3"/></svg>
<div class="t" style="left:1838.4px;top:658px;font-size:19.67px;color:#111">样品分析<span class="n">(44</span>项<span class="n">)</span></div>
<svg class="a" style="left:1804.5px;top:687px" width="24" height="24" viewBox="0 0 24 24"><rect x="1.2" y="2.5" width="16.5" height="19.5" fill="#fff" stroke="#2f5f55" stroke-width="1.8"/><path d="M4 8H12M4 11.5H11M4 15H10M4 18.5H13" stroke="#b9c4e4" stroke-width="1.1"/><path d="M9 17.5L10.5 12L17.5 1.5L21.5 3.8L14.5 14.5Z" fill="#e8a020" stroke="#222" stroke-width="1.3"/><path d="M9 17.5L10.3 13L13.5 15Z" fill="#222"/><path d="M16.5 3L20.5 5.3" stroke="#c03020" stroke-width="2.5"/></svg>
<div class="t" style="left:1833px;top:689.6px;font-size:19.67px;color:#111">报告编写</div>
<div class="t b" style="left:1805px;top:736.9px;font-size:20.8px;letter-spacing:0.5px;transform:scaleY(0.9);color:#000;font-family:'Liberation Serif','Noto Serif CJK SC',serif;font-weight:900">在办业务</div>
<div class="hr" style="left:1805px;top:771.8px;width:249px"></div>
<div class="t" style="left:1805px;top:784.8px;font-size:19.67px;color:#111">监测任务</div>
<div class="t" style="left:1825px;top:814.2px;font-size:19.67px;color:#111">报告编制<span class="n">(18</span>件<span class="n">)</span></div>
<div class="t" style="left:1825px;top:845.8px;font-size:19.67px;color:#111">报告接收</div>
<div class="t" style="left:1805px;top:879.2px;font-size:19.67px;color:#111">监测委托</div>
<div class="t" style="left:1826.5px;top:907.8px;font-size:19.67px;color:#111">日常委托登记</div>
<div class="t" style="left:1825px;top:940.3px;font-size:19.67px;color:#111">报告汇总<span class="n">(140</span>件<span class="n">)</span></div>
<div class="t" style="left:1825px;top:972.1px;font-size:19.67px;color:#111">报告发放<span class="n">(7</span>件<span class="n">)</span></div>
<div class="a" style="left:1788.6px;top:994px;width:309.4px;height:31px;background:linear-gradient(#d9e5f5,#cfddf1);border-top:1.3px solid #a9c3e8;box-sizing:border-box"></div>
<svg class="a" style="left:1797.5px;top:1001.5px" width="27" height="25" viewBox="0 0 27 25"><rect x="1" y="1" width="21" height="19" fill="#f4f7fc" stroke="#8fa8d8" stroke-width="1.4"/><rect x="1" y="1" width="21" height="3.5" fill="#a9c0ea"/><path d="M4 8.5H9M4 12H9M4 15.5H9" stroke="#c9cdd6" stroke-width="1.3"/><path d="M10 13C11 8.5 17 7 20.5 10.5L22.5 8.5V14.5H16.5L18.7 12.3C16.5 10.3 13.5 11 12.8 13.5Z" fill="#4caf3a"/><path d="M25 16C24 20.5 18 22.5 14.5 19L12.5 21V15H18.5L16.3 17.2C18.5 19.2 21.5 18.2 22.2 16Z" fill="#3c9a2c"/></svg>
<div class="t" style="left:1826px;top:1001px;font-size:19.67px;color:#111">刷新数据</div>
<div class="a" style="left:0;top:1025px;width:2098px;height:14px;background:#fff"></div>
</body></html>
